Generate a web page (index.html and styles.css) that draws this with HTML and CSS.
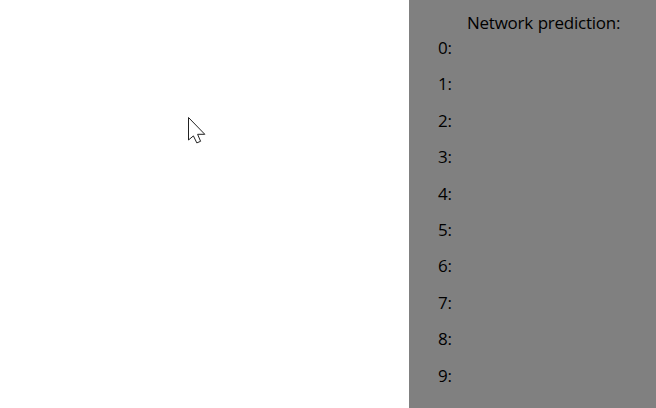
FILE: index.html
```html
<!DOCTYPE html>
<html lang="en">
<head>
<meta charset="utf-8">
<title>Network prediction</title>
<link rel="stylesheet" href="styles.css">
</head>
<body>
<main class="app">
  <section class="canvas">
    <svg class="cursor" width="20" height="29" viewBox="0 0 20 29"><path d="M1.5 1.5V24L6.4 19.9L9.8 26.9L13.6 25.3L10.6 18.3H17.8Z"/></svg>
  </section>
  <aside class="panel">
    <h1 class="title">Network prediction:</h1>
    <ul class="digits">
      <li>0:</li><li>1:</li><li>2:</li><li>3:</li><li>4:</li>
      <li>5:</li><li>6:</li><li>7:</li><li>8:</li><li>9:</li>
    </ul>
  </aside>
</main>
</body>
</html>
```

FILE: styles.css
```css
body {
  margin: 0;
  font-family: "Open Sans", "Noto Sans", sans-serif;
  font-size: 17px;
  letter-spacing: -0.25px;
  color: #000;
}
.app {
  display: grid;
  grid-template-columns: 409px 1fr;
  height: 408px;
  overflow: hidden;
}
.canvas {
  position: relative;
  background: #fff;
}
.cursor {
  position: absolute;
  left: 187px;
  top: 116px;
  fill: #fff;
  stroke: #222;
}
.panel {
  background: #808080;
  padding: 10px 0 0 29px;
}
.title {
  margin: 0 0 0 29px;
  font-size: 17px;
  font-weight: 400;
  line-height: 26px;
  word-spacing: 0.6px;
}
.digits {
  margin: 0;
  padding: 0;
  list-style: none;
}
.digits li {
  height: 36.4px;
  line-height: 23px;
}
```
